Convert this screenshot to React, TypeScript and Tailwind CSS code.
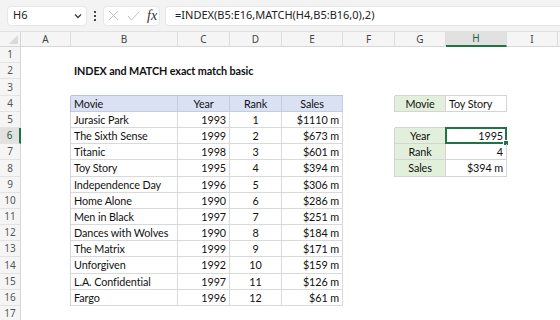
import React from 'react';

const colWidths = [50, 107, 52, 52, 61, 52, 51, 61, 51];
const colNames = ['A', 'B', 'C', 'D', 'E', 'F', 'G', 'H', 'I'];
const rowHeights = [16, 16, 17, 16, 16, 16, 16, 17, 16, 16, 16, 16, 16, 17, 16, 16, 16];

const movies: [string, string, string, string][] = [
  ['Jurasic Park', '1993', '1', '$1110 m'],
  ['The Sixth Sense', '1999', '2', '$673 m'],
  ['Titanic', '1998', '3', '$601 m'],
  ['Toy Story', '1995', '4', '$394 m'],
  ['Independence Day', '1996', '5', '$306 m'],
  ['Home Alone', '1990', '6', '$286 m'],
  ['Men in Black', '1997', '7', '$251 m'],
  ['Dances with Wolves', '1990', '8', '$184 m'],
  ['The Matrix', '1999', '9', '$171 m'],
  ['Unforgiven', '1992', '10', '$159 m'],
  ['L.A. Confidential', '1997', '11', '$126 m'],
  ['Fargo', '1996', '12', '$61 m'],
];

type Cell = { text?: string; cls: string; selected?: boolean };

function getCell(row: number, col: string): Cell {
  const base = 'px-[3px]';
  // title
  if (row === 2 && col === 'B') return { text: 'INDEX and MATCH exact match basic', cls: `${base} font-bold overflow-visible` };

  // main table B4:E16
  const inMain = row >= 4 && row <= 16 && 'BCDE'.includes(col);
  if (inMain) {
    if (row === 4) {
      const labels: Record<string, string> = { B: 'Movie', C: 'Year', D: 'Rank', E: 'Sales' };
      return {
        text: labels[col],
        cls: `${base} bg-[#d9e1f2] border-r border-b border-[#c4cde0] ${col === 'B' ? 'justify-start' : 'justify-center'}`,
      };
    }
    const m = movies[row - 5];
    const idx = 'BCDE'.indexOf(col);
    const align = col === 'B' ? 'justify-start' : col === 'D' ? 'justify-center' : 'justify-end';
    return { text: m[idx], cls: `${base} border-r border-b border-[#d9d9d9] ${align}` };
  }
  // top edge of main table
  if (row === 3 && 'BCDE'.includes(col)) return { cls: 'border-b border-[#b8c3da]' };
  // left edge of main table
  if (col === 'A' && row >= 4 && row <= 16) return { cls: `border-r ${row === 4 ? 'border-[#b8c3da]' : 'border-[#d4d4d4]'}` };

  // lookup table
  const lookup: Record<number, [string, string]> = {
    4: ['Movie', 'Toy Story'],
    6: ['Year', '1995'],
    7: ['Rank', '4'],
    8: ['Sales', '$394 m'],
  };
  if (lookup[row] && (col === 'G' || col === 'H')) {
    const [label, value] = lookup[row];
    if (col === 'G') return { text: label, cls: `${base} bg-[#e2efda] border-r border-b border-[#d4d4d4] justify-center` };
    return {
      text: value,
      cls: `${base} border-r border-b border-[#d4d4d4] ${row === 4 ? 'justify-start' : 'justify-end'}`,
      selected: row === 6,
    };
  }
  if ((row === 3 || row === 5) && (col === 'G' || col === 'H')) return { cls: 'border-b border-[#d4d4d4]' };
  if (col === 'F' && lookup[row]) return { cls: 'border-r border-[#d4d4d4]' };
  return { cls: '' };
}

function Toolbar() {
  return (
    <div className="flex items-center h-[32px] bg-[#f3f3f3] border-b border-[#e1e1e1]">
      <div className="ml-[7px] w-[80px] h-[20px] bg-white rounded-[4px] border border-[#e6e6e6] flex items-center justify-between pl-[5px] pr-[4px]">
        <span className="text-[11px] text-[#222]">H6</span>
        <svg width="8" height="6" viewBox="0 0 8 6" className="text-[#444]">
          <path d="M1 1.5 L4 4.5 L7 1.5" fill="none" stroke="currentColor" strokeWidth="1.4" />
        </svg>
      </div>
      <div className="ml-[7px] flex flex-col gap-[2px] w-[2px]">
        <span className="w-[2px] h-[2px] bg-[#444]" />
        <span className="w-[2px] h-[2px] bg-[#444]" />
        <span className="w-[2px] h-[2px] bg-[#444]" />
      </div>
      <div className="ml-[7px] w-[57px] h-[20px] bg-white rounded-[4px] border border-[#e6e6e6] flex items-center">
        <svg width="11" height="11" viewBox="0 0 11 11" className="ml-[4px]">
          <path d="M1 1 L10 10 M10 1 L1 10" stroke="#c2c2c2" strokeWidth="1" fill="none" />
        </svg>
        <svg width="13" height="10" viewBox="0 0 13 10" className="ml-[8px]">
          <path d="M1 5 L4.5 9 L12 1" stroke="#c2c2c2" strokeWidth="1" fill="none" />
        </svg>
        <span className="ml-[7px] text-[14px] italic text-[#333] leading-none" style={{ fontFamily: '"Liberation Serif", serif' }}>
          fx
        </span>
      </div>
      <div className="ml-[5px] flex-1 h-[20px] bg-white rounded-l-[4px] border border-r-0 border-[#e6e6e6] flex items-center pl-[9px]">
        <span className="text-[11px] text-[#222] whitespace-nowrap">=INDEX(B5:E16,MATCH(H4,B5:B16,0),2)</span>
      </div>
    </div>
  );
}

export default function App() {
  return (
    <div className="w-[560px] h-[320px] overflow-hidden bg-white" style={{ fontFamily: '"Noto Sans", "Open Sans", sans-serif' }}>
      <Toolbar />
      <div className="grid grid-cols-[21px_50px_107px_52px_52px_61px_52px_51px_61px_51px_20px]">
        {/* column headers */}
        <div className="h-[15px] bg-[#f5f5f5] border-r border-b border-[#d6d6d6] relative">
          <svg width="9" height="9" viewBox="0 0 9 9" className="absolute right-[2px] bottom-[2px]">
            <path d="M9 0 L9 9 L0 9 Z" fill="#dadada" />
          </svg>
        </div>
        {colNames.map((c) => (
          <div
            key={c}
            className={`h-[15px] flex items-center justify-center text-[10px] border-r border-[#dcdcdc] ${
              c === 'H' ? 'bg-[#e1e1e1] border-b-2 border-b-[#217346] text-[#1d5e3a]' : 'bg-[#f5f5f5] border-b border-b-[#d6d6d6] text-[#444]'
            }`}
          >
            {c}
          </div>
        ))}
        <div className="h-[15px] bg-[#f5f5f5] border-b border-[#d6d6d6]" />

        {rowHeights.map((h, i) => {
          const row = i + 1;
          return (
            <React.Fragment key={row}>
              <div
                className={`flex items-center justify-center text-[10px] border-b border-[#e3e3e3] ${
                  row === 6 ? 'bg-[#e1e1e1] border-r-2 border-r-[#217346] text-[#1d5e3a]' : 'bg-[#f5f5f5] border-r border-r-[#d6d6d6] text-[#555]'
                }`}
                style={{ height: h }}
              >
                {row}
              </div>
              {colNames.map((c) => {
                const cell = getCell(row, c);
                return (
                  <div
                    key={c}
                    className={`relative flex items-center whitespace-nowrap text-[10.8px] tracking-[-0.1px] text-[#111] leading-none pt-[1px] ${cell.cls}`}
                    style={{ height: h, fontFamily: 'Lato, "Noto Sans", sans-serif' }}
                  >
                    {cell.text}
                    {cell.selected && (
                      <div className="absolute -left-[1px] -top-[1px] -right-[1px] -bottom-[1px] border-2 border-[#217346]">
                        <span className="absolute -right-[4px] -bottom-[4px] w-[6px] h-[6px] bg-[#217346] border border-white" />
                      </div>
                    )}
                  </div>
                );
              })}
              <div style={{ height: h }} />
            </React.Fragment>
          );
        })}
      </div>
    </div>
  );
}
